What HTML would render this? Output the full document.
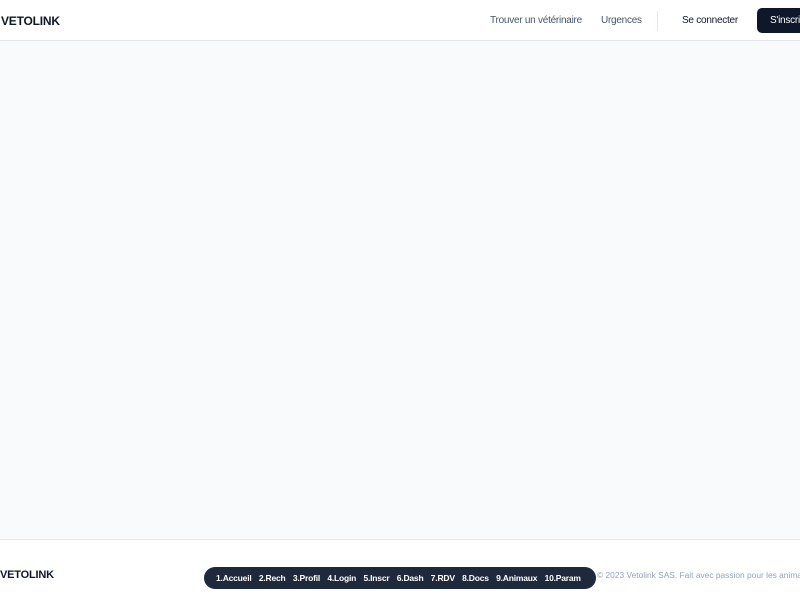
<!DOCTYPE html>
<html><head><meta charset="utf-8"><style>
*{margin:0;padding:0;box-sizing:border-box}
body{width:800px;height:600px;overflow:hidden;background:#f8fafc;font-family:"Liberation Sans",sans-serif;position:relative}
.hdr{position:absolute;top:0;left:0;width:800px;height:41px;background:#fff;border-bottom:1px solid #e5e7eb}
.logo{position:absolute;font-weight:bold;color:#0f172a;font-size:12px;letter-spacing:-0.2px}
.nav{position:absolute;top:15px;font-size:10px;color:#475569;letter-spacing:-0.25px}
.sep{position:absolute;left:657px;top:11px;width:1px;height:20px;background:#e5e7eb}
.btn{position:absolute;left:757px;top:8px;width:60px;height:25px;background:#0f172a;border-radius:5px;color:#fff;font-size:10px;letter-spacing:-0.25px;padding:7px 0 0 13px;white-space:nowrap}
.ftr{position:absolute;top:539px;left:0;width:800px;height:61px;background:#fff;border-top:1px solid #e5e7eb}
.pill{position:absolute;left:204px;top:567px;width:392px;height:22px;background:#1e293b;border-radius:11px;color:#fff;font-size:8.5px;font-weight:bold;white-space:nowrap;padding:6px 0 0 12px;letter-spacing:-0.2px}
.pill span{margin-right:7.3px}
.copy{position:absolute;left:597px;top:570px;font-size:8.4px;color:#94a3b8;white-space:nowrap}
</style></head><body>
<div class="hdr">
<div class="logo" style="left:1px;top:14px">VETOLINK</div>
<div class="nav" style="left:490px">Trouver un vétérinaire</div>
<div class="nav" style="left:601px">Urgences</div>
<div class="sep"></div>
<div class="nav" style="left:682px;color:#0f172a">Se connecter</div>
<div class="btn">S'inscrire</div>
</div>
<div class="ftr"></div>
<div class="logo" style="left:0;top:569px;font-size:11px">VETOLINK</div>
<div class="pill"><span>1.Accueil</span><span>2.Rech</span><span>3.Profil</span><span>4.Login</span><span>5.Inscr</span><span>6.Dash</span><span>7.RDV</span><span>8.Docs</span><span>9.Animaux</span><span>10.Param</span></div>
<div class="copy">© 2023 Vetolink SAS. Fait avec passion pour les animaux.</div>
</body></html>
